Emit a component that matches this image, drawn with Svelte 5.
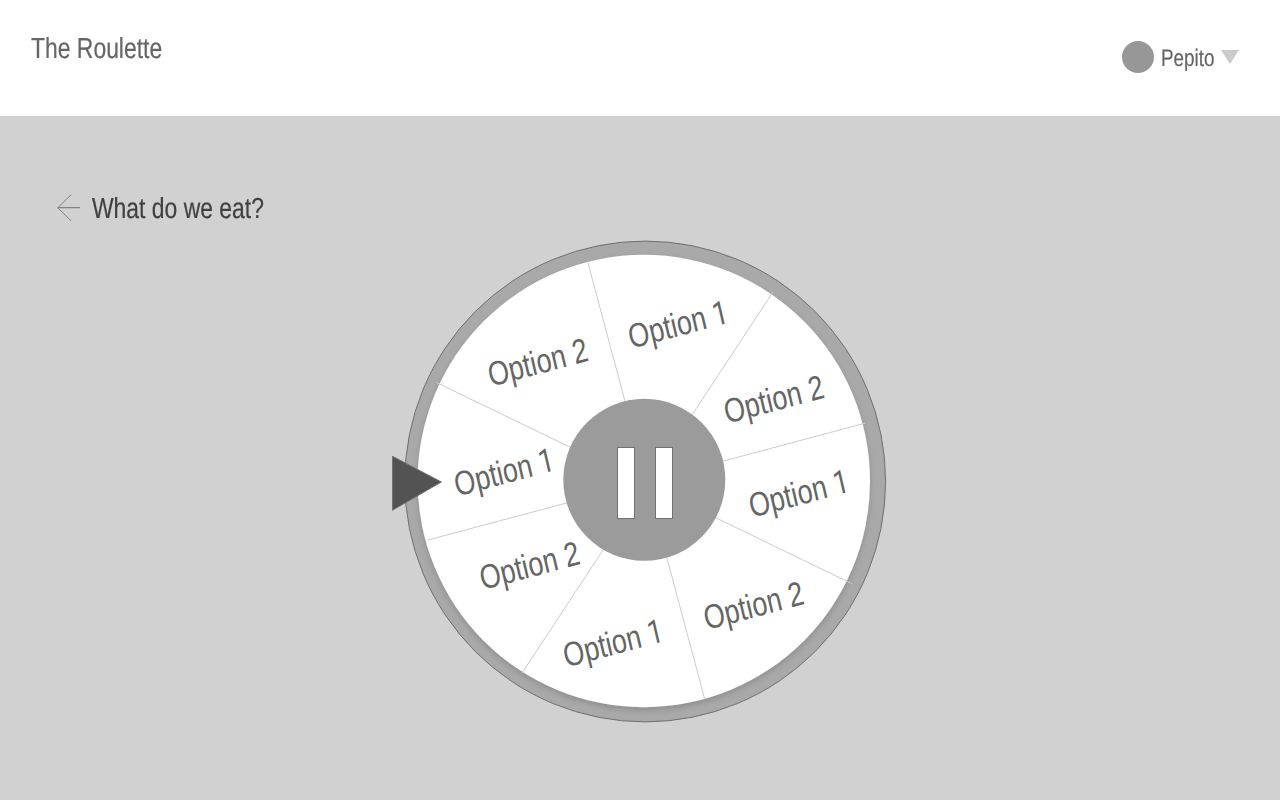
<script>
  const dividers = [
    [588, 263, 704.8, 699.5],
    [773, 292, 522, 673],
    [865, 423.2, 428, 540],
    [436.5, 382.5, 852.5, 584]
  ];
  const labels = [
    [1, 631.3, 348.8],
    [2, 726.9, 423.8],
    [1, 752, 517.8],
    [2, 706.7, 630.1],
    [1, 566.3, 667.5],
    [2, 482.7, 590.1],
    [1, 457.3, 496.5],
    [2, 491, 386.8]
  ];
</script>

<div class="page">
  <header>
    <h1><span class="narrow">The Roulette</span></h1>
    <div class="user">
      <span class="avatar"></span>
      <span class="name"><span class="narrow">Pepito</span></span>
      <svg width="18" height="14" viewBox="0 0 18 14"><path d="M0 0H18L9 14Z" fill="#cbcbcb" /></svg>
    </div>
  </header>
  <main>
    <div class="question">
      <svg width="24" height="28" viewBox="0 0 24 28" fill="none" stroke="#707070">
        <path d="M14.3 .5L.8 13.8L14.3 27" stroke-width=".8" />
        <path d="M.8 13.7H23" />
      </svg>
      <h2><span class="narrow">What do we eat?</span></h2>
    </div>
    <svg class="wheel" width="500" height="490" viewBox="390 237 500 490">
      <defs>
        <filter id="lift" x="-10%" y="-10%" width="120%" height="120%">
          <feDropShadow dx="0" dy="3" stdDeviation="3" flood-color="#000" flood-opacity=".16" />
        </filter>
      </defs>
      <circle cx="645.2" cy="481.5" r="240.4" fill="#a9a9a9" stroke="#707070" />
      <circle cx="643.8" cy="481" r="226.2" fill="#fff" filter="url(#lift)" />
      {#each dividers as [x1, y1, x2, y2]}
        <line {x1} {y1} {x2} {y2} stroke="#cbcbcb" />
      {/each}
      {#each labels as [number, x, y]}
        <text transform="matrix(.762 -.205 .225 .96 {x} {y})">Option <tspan class:one={number === 1}>{number}</tspan></text>
      {/each}
      <circle cx="644.3" cy="479.8" r="81" fill="#9b9b9b" />
      <rect x="617.5" y="447.5" width="17" height="71" fill="#fff" stroke="#707070" />
      <rect x="655.5" y="447.5" width="17" height="71" fill="#fff" stroke="#707070" />
      <path d="M392.5 456.3L441.4 482L392.5 510.2Z" fill="#535353" stroke="#707070" />
    </svg>
  </main>
</div>

<style>
  :global(body) {
    margin: 0;
  }
  .page {
    width: 1280px;
    height: 800px;
    overflow: hidden;
    background: #d1d1d1;
    font-family: 'Liberation Sans', Arial, sans-serif;
    color: #656565;
    text-rendering: geometricPrecision;
  }
  header {
    box-sizing: border-box;
    height: 116px;
    padding: 33px 41px 0 31px;
    background: linear-gradient(#fff 111px, #fafafa 116px);
    display: flex;
    justify-content: space-between;
    align-items: flex-start;
  }
  h1,
  h2 {
    margin: 0;
    font-size: 29px;
    line-height: 32px;
    font-weight: 400;
  }
  .narrow {
    display: inline-block;
    white-space: nowrap;
    transform: scaleX(0.79);
    transform-origin: left;
    -webkit-text-stroke: 0.2px currentColor;
  }
  .user {
    display: flex;
    align-items: center;
    margin-top: 8px;
    height: 32px;
  }
  .avatar {
    width: 32px;
    height: 32px;
    border-radius: 50%;
    background: #979797;
    margin-right: 7px;
  }
  .name {
    width: 60px;
    font-size: 24px;
    line-height: 26px;
    padding-top: 4px;
  }
  .name .narrow {
    transform: scaleX(0.785);
  }
  main {
    padding: 76px 0 0 57px;
  }
  .question {
    display: flex;
    height: 32px;
    gap: 11px;
    color: #404040;
  }
  .question svg {
    margin-top: 2px;
  }
  .question h2 {
    padding-top: 1px;
  }
  .wheel {
    display: block;
    margin: 13px 0 0 333px;
  }
  .wheel text {
    font-size: 34.3px;
    fill: #656565;
  }
  .one {
    font-family: Roboto, sans-serif;
    font-size: 33.5px;
  }
</style>
